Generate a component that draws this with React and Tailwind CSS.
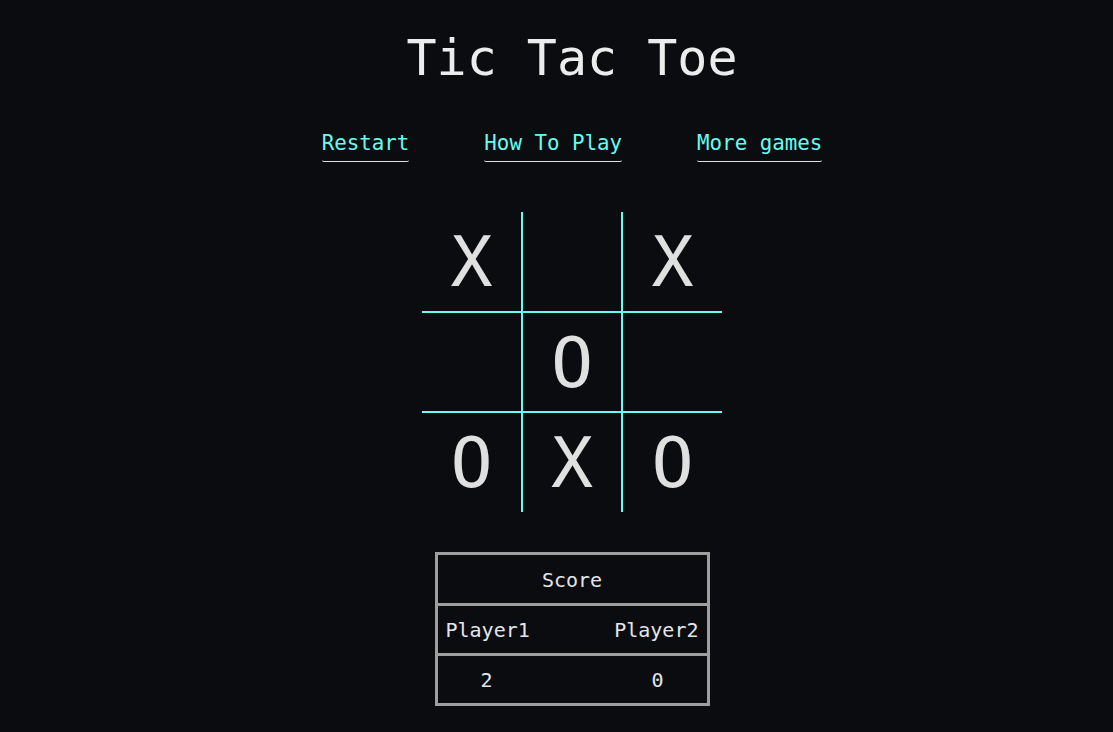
import React from 'react';

const board = ['X', '', 'X', '', 'O', '', 'O', 'X', 'O'];

const cellBorder = [
  'border-r-2 border-b-2',
  'border-r-2 border-b-2',
  'border-b-2',
  'border-r-2 border-b-2',
  'border-r-2 border-b-2',
  'border-b-2',
  'border-r-2',
  'border-r-2',
  '',
];

export default function App() {
  return (
    <div
      className="min-h-screen bg-[#0b0c10] flex flex-col items-center pl-[31px] text-[#e6e6e6]"
      style={{ fontFamily: '"DejaVu Sans Mono", "Liberation Mono", monospace' }}
    >
      <h1 className="mt-[33px] h-[50px] text-[50px] leading-none text-[#ececec]">Tic Tac Toe</h1>

      {/* links */}
      <nav className="mt-[50px] flex items-center gap-[75px]">
        {['Restart', 'How To Play', 'More games'].map((label) => (
          <a
            key={label}
            href="#"
            className="block text-[20.8px] leading-none text-[#66fcf1] pb-[7px] border-b border-[#e0e0e0] rounded-[2px]"
          >
            {label}
          </a>
        ))}
      </nav>

      {/* board */}
      <div className="mt-[50px] grid grid-cols-[101px_100px_99px] grid-rows-[101px_100px_99px]">
        {board.map((v, i) => (
          <div
            key={i}
            className={`flex items-center justify-center border-[#66fcf1] text-[70px] leading-none text-[#e0e0e0] pt-[2px] ${cellBorder[i]}`}
          >
            {v}
          </div>
        ))}
      </div>

      {/* score table */}
      <div className="mt-[40px] w-[275px] border-[3px] border-[#9e9e9e] text-[20px] leading-none text-[#e4e6ea]">
        <div className="h-[51px] pt-[2px] flex items-center justify-center border-b-[3px] border-[#9e9e9e]">Score</div>
        <div className="h-[50px] pt-[2px] flex items-center justify-between border-b-[3px] border-[#9e9e9e]">
          <span className="px-2 text-center">Player1</span>
          <span className="px-2 text-center">Player2</span>
        </div>
        <div className="h-[47px] pt-[2px] flex items-center justify-between">
          <span className="w-[98px] text-center">2</span>
          <span className="w-[98px] text-center">0</span>
        </div>
      </div>
    </div>
  );
}
